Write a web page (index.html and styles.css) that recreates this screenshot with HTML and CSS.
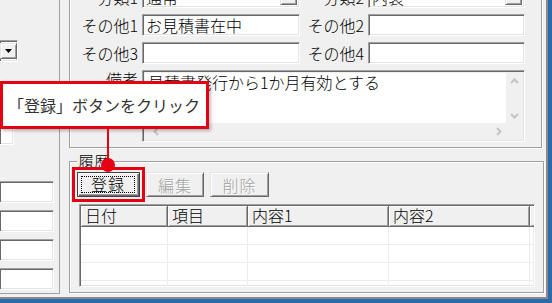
FILE: index.html
```html
<!DOCTYPE html>
<html lang="ja">

<head>
    <meta charset="UTF-8">
    <title>見積登録</title>
    <link rel="stylesheet" href="styles.css">
</head>

<body>
    <div class="window">
        <div class="frame">
            <div class="side">
                <div class="field side-combo">
                    <span class="drop"><svg width="7" height="4" viewBox="0 0 7 4"><path d="M0 0h7L3.5 4z" fill="#000"/></svg></span>
                </div>
                <div class="field side-memo"></div>
                <div class="field side-input first"></div>
                <div class="field side-input"></div>
                <div class="field side-input"></div>
                <div class="field side-input"></div>
            </div>

            <div class="main">
                <div class="group info">
                    <div class="form">
                        <label>分類1</label>
                        <div class="field combo"><span class="value">通常</span><span class="drop"></span></div>
                        <label>分類2</label>
                        <div class="field combo"><span class="value">内装</span><span class="drop"></span></div>

                        <label>その他1</label>
                        <div class="field">お見積書在中</div>
                        <label>その他2</label>
                        <div class="field"></div>

                        <label>その他3</label>
                        <div class="field"></div>
                        <label>その他4</label>
                        <div class="field"></div>

                        <label class="top">備考</label>
                        <div class="field memo">
                            <div class="memo-text">見積書発行から1か月有効とする</div>
                            <div class="vscroll">
                                <svg width="9" height="6" viewBox="0 0 9 6"><path d="M1 5l3.5-3.5L8 5" fill="none" stroke="#c4c4c4" stroke-width="2"/></svg>
                                <svg width="9" height="6" viewBox="0 0 9 6"><path d="M1 1l3.5 3.5L8 1" fill="none" stroke="#c4c4c4" stroke-width="2"/></svg>
                            </div>
                            <div class="hscroll">
                                <svg width="6" height="9" viewBox="0 0 6 9"><path d="M5 1L1.5 4.5 5 8" fill="none" stroke="#c4c4c4" stroke-width="2"/></svg>
                                <svg width="6" height="9" viewBox="0 0 6 9"><path d="M1 1l3.5 3.5L1 8" fill="none" stroke="#c4c4c4" stroke-width="2"/></svg>
                            </div>
                        </div>
                    </div>
                </div>

                <fieldset class="group history">
                    <legend>履歴</legend>
                    <div class="buttons">
                        <button class="btn default highlight"><span class="focus">登録</span></button>
                        <button class="btn edit" disabled>編集</button>
                        <button class="btn delete" disabled>削除</button>
                    </div>
                    <div class="list">
                        <div class="list-head">
                            <div class="col">日付</div>
                            <div class="col">項目</div>
                            <div class="col">内容1</div>
                            <div class="col">内容2</div>
                            <div class="col rest"></div>
                        </div>
                        <div class="list-row"><div></div><div></div><div></div><div></div><div></div></div>
                        <div class="list-row"><div></div><div></div><div></div><div></div><div></div></div>
                        <div class="list-row"><div></div><div></div><div></div><div></div><div></div></div>
                        <div class="list-row"><div></div><div></div><div></div><div></div><div></div></div>
                    </div>
                </fieldset>
            </div>
        </div>

        <!-- 操作説明の吹き出し -->
        <div class="callout">「登録」ボタンをクリック</div>
        <div class="callout-line"></div>
        <div class="callout-dot"></div>
    </div>
</body>

</html>
```

FILE: styles.css
```css
* {
    box-sizing: border-box;
}

body {
    margin: 0;
    font-family: "Noto Sans CJK JP", "Liberation Sans", sans-serif;
    font-size: 16px;
    font-weight: 300;
    color: #000;
}

.window {
    position: relative;
    width: 552px;
    height: 303px;
    overflow: hidden;
    background-color: #f0f0f0;
    border-right: 4px solid #2b6bab;
    border-bottom: 4px solid #2b6bab;
}

.frame {
    display: flex;
    height: 100%;
    border-right: 2px solid #8a8a8a;
    border-bottom: 2px solid #8a8a8a;
}

/* 入力欄（へこみ枠） */
.field {
    height: 22px;
    background-color: #fff;
    border: 1px solid;
    border-color: #a0a0a0 #fff #fff #a0a0a0;
    box-shadow: inset 1px 1px 0 #696969, inset -1px -1px 0 #e3e3e3;
    padding: 0 3px;
    line-height: 20px;
    white-space: nowrap;
    overflow: hidden;
}

.drop {
    display: flex;
    align-items: center;
    justify-content: center;
    width: 17px;
    height: 100%;
    background-color: #f0f0f0;
    border: 1px solid;
    border-color: #e3e3e3 #696969 #696969 #e3e3e3;
    box-shadow: inset 1px 1px 0 #fff, inset -1px -1px 0 #a0a0a0;
}

/* 左側パネル */
.side {
    width: 60px;
    height: 294px;
    flex-shrink: 0;
    display: flex;
    flex-direction: column;
    overflow: hidden;
    border-right: 1px solid #a0a0a0;
    border-bottom: 1px solid #a0a0a0;
}

.side-combo {
    width: 18px;
    margin-top: 40px;
    padding: 2px 1px 2px 0;
    border-left: none;
}

.side-memo {
    width: 14px;
    height: 55px;
    margin-top: 28px;
    border-left: none;
}

.side-input {
    width: 54px;
    margin-top: 7px;
    border-left: none;
}

.side-input.first {
    margin-top: 36px;
}

/* 右側 */
.main {
    flex: 1;
    display: flex;
    flex-direction: column;
}

.group {
    border: 1px solid #a0a0a0;
    box-shadow: inset 1px 1px 0 #fff, 1px 1px 0 #fff;
}

.info {
    margin: -20px 7px 0 9px;
    padding: 5px 0 5px 0;
}

.form {
    display: grid;
    grid-template-columns: 72px 158px 68px 157px;
    grid-template-rows: 22px 22px 22px 72px;
    row-gap: 6px;
}

.form label {
    text-align: right;
    padding-right: 4px;
    line-height: 22px;
    white-space: nowrap;
}

.form label.top {
    line-height: 18px;
}

.combo {
    display: flex;
    padding: 2px 2px 2px 3px;
}

.combo .value {
    flex: 1;
    line-height: 16px;
}

.memo {
    grid-column: 2 / 5;
    height: 72px;
    display: grid;
    grid-template-columns: 1fr 16px;
    grid-template-rows: 1fr 17px;
    padding: 2px 2px 1px 2px;
    background-color: #f0f0f0;
}

.memo-text {
    background-color: #fff;
    padding: 0 3px;
    line-height: 18px;
}

.vscroll {
    display: flex;
    flex-direction: column;
    justify-content: space-between;
    align-items: center;
    padding: 5px 0 4px;
}

.hscroll {
    grid-column: 1 / 3;
    display: flex;
    justify-content: space-between;
    align-items: center;
    padding: 0 20px 0 8px;
}

/* 履歴 */
.history {
    margin: 5px 5px 0 9px;
    padding: 3px 7px 5px 7px;
    min-width: 0;
}

.history legend {
    padding: 0 1px;
    margin-left: 0;
    line-height: 16px;
    background-color: #f0f0f0;
}

.buttons {
    display: flex;
    gap: 6px;
    height: 25px;
}

.btn {
    height: 25px;
    padding: 0;
    font-family: inherit;
    font-size: 16px;
    font-weight: 300;
    color: #000;
    background-color: #f0f0f0;
    border: 1px solid;
    border-color: #e3e3e3 #696969 #696969 #e3e3e3;
    box-shadow: inset 1px 1px 0 #fff, inset -1px -1px 0 #a0a0a0;
}

.btn.default {
    width: 63px;
    display: flex;
    border: 1px solid #404040;
    box-shadow: inset 1px 1px 0 #fff, inset -1px -1px 0 #696969, inset -2px -2px 0 #a0a0a0;
}

.btn .focus {
    flex: 1;
    margin: 3px 4px 3px 3px;
    border: 1px dotted #000;
    line-height: 15px;
    letter-spacing: 1px;
}

.highlight {
    outline: 3px solid #e60012;
    outline-offset: 2px;
}

.btn.edit {
    width: 58px;
}

.btn.delete {
    width: 59px;
}

.btn:disabled {
    color: #a0a0a0;
    text-shadow: 1px 1px 0 #fff;
    letter-spacing: 1px;
}

.list {
    height: 83px;
    margin: 7px 1px 0 2px;
    background-color: #fff;
    border: 1px solid;
    border-color: #a0a0a0 #fff #fff #a0a0a0;
    box-shadow: inset 1px 1px 0 #696969, inset -1px -1px 0 #e3e3e3;
    padding: 1px 0 0 1px;
    overflow: hidden;
}

.list-head,
.list-row {
    display: grid;
    grid-template-columns: 87px 80px 141px 141px 1fr;
}

.list-head .col {
    height: 21px;
    line-height: 19px;
    padding-left: 4px;
    background-color: #f0f0f0;
    border-right: 1px solid #696969;
    border-bottom: 1px solid #696969;
    box-shadow: inset 1px 1px 0 #fff, inset -1px -1px 0 #a0a0a0;
}

.list-head .rest {
    border-right: none;
    box-shadow: inset 1px 1px 0 #fff, inset 0 -1px 0 #a0a0a0;
}

.list-row div {
    height: 18px;
    border-right: 1px solid #ececec;
    border-bottom: 1px solid #ececec;
}

/* 吹き出し */
.callout {
    position: absolute;
    left: 0;
    top: 81px;
    width: 209px;
    height: 48px;
    display: flex;
    align-items: center;
    padding-left: 5px;
    background-color: #fff;
    border: 3px solid #e60012;
    box-shadow: 2px 2px 3px rgba(0, 0, 0, 0.25);
    color: #333;
    font-size: 16px;
    font-weight: 400;
    white-space: nowrap;
}

.callout-line {
    position: absolute;
    left: 107px;
    top: 129px;
    width: 2px;
    height: 32px;
    background-color: #e60012;
}

.callout-dot {
    position: absolute;
    left: 101px;
    top: 158px;
    width: 14px;
    height: 14px;
    border-radius: 50%;
    background-color: #e60012;
}
```
